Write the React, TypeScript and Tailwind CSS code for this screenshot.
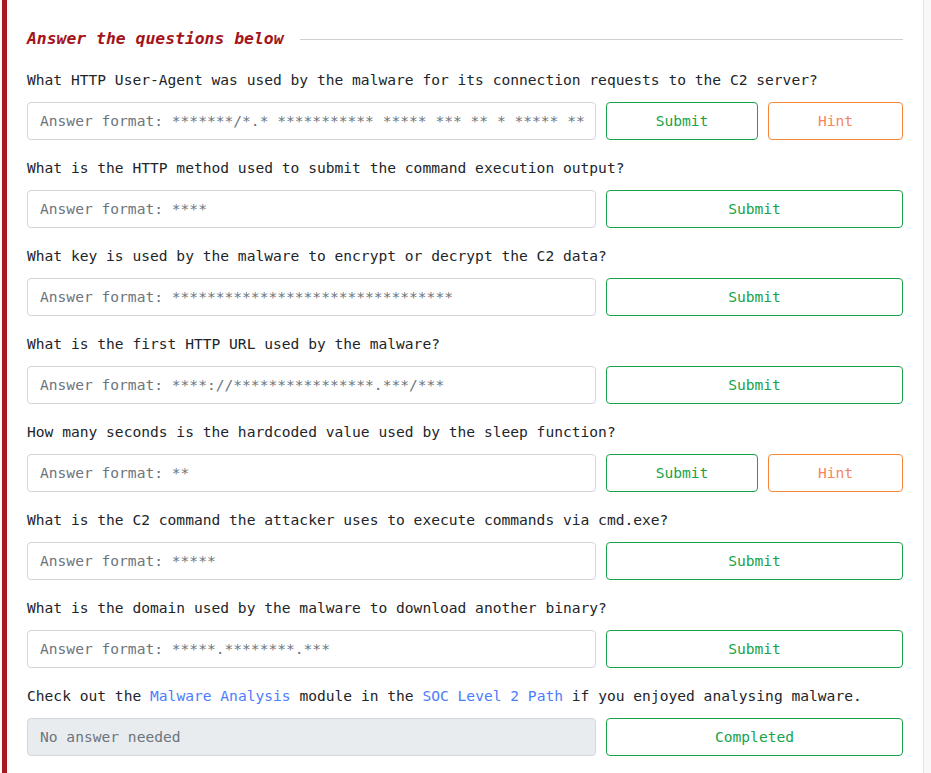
import React from "react";

type Question = {
  text: React.ReactNode;
  format: string;
  hint?: boolean;
  done?: boolean;
};

const questions: Question[] = [
  {
    text: "What HTTP User-Agent was used by the malware for its connection requests to the C2 server?",
    format: "*******/*.* *********** ***** *** ** * ***** **",
    hint: true,
  },
  {
    text: "What is the HTTP method used to submit the command execution output?",
    format: "****",
  },
  {
    text: "What key is used by the malware to encrypt or decrypt the C2 data?",
    format: "********************************",
  },
  {
    text: "What is the first HTTP URL used by the malware?",
    format: "****://****************.***/***",
  },
  {
    text: "How many seconds is the hardcoded value used by the sleep function?",
    format: "**",
    hint: true,
  },
  {
    text: "What is the C2 command the attacker uses to execute commands via cmd.exe?",
    format: "*****",
  },
  {
    text: "What is the domain used by the malware to download another binary?",
    format: "*****.********.***",
  },
  {
    text: (
      <>
        Check out the{" "}
        <span className="text-[#4d7cfe]">Malware Analysis</span> module in the{" "}
        <span className="text-[#4d7cfe]">SOC Level 2 Path</span> if you enjoyed
        analysing malware.
      </>
    ),
    format: "No answer needed",
    done: true,
  },
];

const QuestionRow = ({ q }: { q: Question }) => (
  <div className="mb-4">
    <p className="h-6 leading-6 text-[#212529] whitespace-pre">{q.text}</p>
    <div className="mt-[10px] flex h-[38px] gap-[10px]">
      <div
        className={`flex w-[569px] shrink-0 items-center overflow-hidden whitespace-pre rounded-[4px] border border-[#d3d6db] px-3 text-[#6c757d] ${
          q.done ? "bg-[#e9ecef]" : "bg-white"
        }`}
      >
        {q.done ? q.format : `Answer format: ${q.format}`}
      </div>
      <button
        className={`flex items-center justify-center rounded-[4px] border border-[#16a34a] text-[#16a34a] ${
          q.hint ? "w-[152px]" : "flex-1"
        }`}
      >
        {q.done ? "Completed" : "Submit"}
      </button>
      {q.hint && (
        <button className="flex flex-1 items-center justify-center rounded-[4px] border border-[#f7883a] text-[#f8855c]">
          Hint
        </button>
      )}
    </div>
  </div>
);

export default function App() {
  return (
    <div
      className="flex h-[773px] w-full overflow-hidden bg-[#f8f8f8] text-[14.6px]"
      style={{ fontFamily: '"DejaVu Sans Mono", "Liberation Mono", monospace' }}
    >
      <div className="ml-[2px] w-[922px] shrink-0 border-l-[5px] border-r border-l-[#a8171b] border-r-[#e3e3e3] bg-white px-5 pt-[27px]">
        {/* Heading */}
        <div className="mb-[17px] flex h-6 items-center gap-4">
          <h2 className="text-[16.4px] font-bold italic text-[#a3141a]">
            Answer the questions below
          </h2>
          <div className="h-px flex-1 bg-[#d0d0d0]" />
        </div>

        {questions.map((q, i) => (
          <QuestionRow key={i} q={q} />
        ))}
      </div>
    </div>
  );
}
